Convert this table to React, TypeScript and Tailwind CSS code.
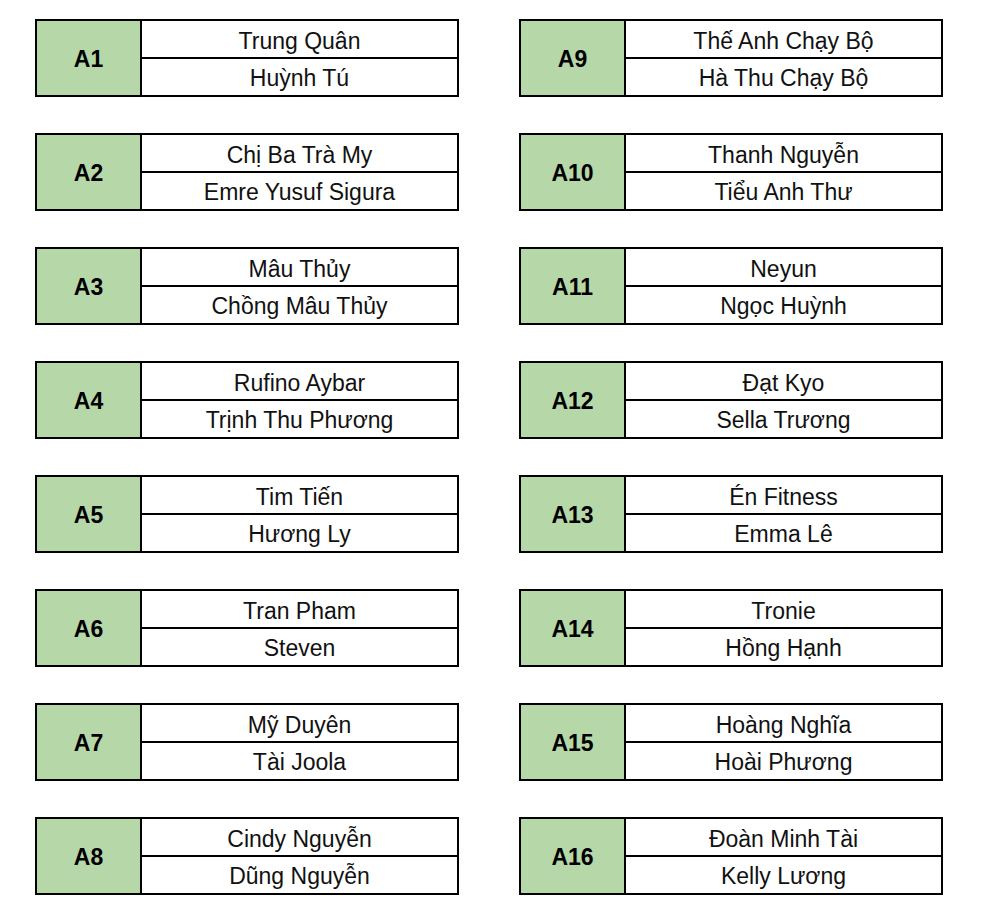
const left = [
  ["A1", "Trung Quân", "Huỳnh Tú"],
  ["A2", "Chị Ba Trà My", "Emre Yusuf Sigura"],
  ["A3", "Mâu Thủy", "Chồng Mâu Thủy"],
  ["A4", "Rufino Aybar", "Trịnh Thu Phương"],
  ["A5", "Tim Tiến", "Hương Ly"],
  ["A6", "Tran Pham", "Steven"],
  ["A7", "Mỹ Duyên", "Tài Joola"],
  ["A8", "Cindy Nguyễn", "Dũng Nguyễn"],
];

const right = [
  ["A9", "Thế Anh Chạy Bộ", "Hà Thu Chạy Bộ"],
  ["A10", "Thanh Nguyễn", "Tiểu Anh Thư"],
  ["A11", "Neyun", "Ngọc Huỳnh"],
  ["A12", "Đạt Kyo", "Sella Trương"],
  ["A13", "Én Fitness", "Emma Lê"],
  ["A14", "Tronie", "Hồng Hạnh"],
  ["A15", "Hoàng Nghĩa", "Hoài Phương"],
  ["A16", "Đoàn Minh Tài", "Kelly Lương"],
];

function Pair({ code, first, second }: { code: string; first: string; second: string }) {
  return (
    <div className="flex h-[78px] w-[424px] border-2 border-black">
      <div className="flex w-[105px] items-center justify-center border-r-2 border-black bg-[#b6d7a8] pt-[2px] text-[23px] font-bold text-black">
        {code}
      </div>
      <div className="flex flex-1 flex-col">
        <div className="flex h-[38px] shrink-0 items-center justify-center border-b-2 border-black pt-[4px] text-[23px] text-[#111]">
          {first}
        </div>
        <div className="flex flex-1 items-center justify-center pt-[2px] text-[23px] text-[#111]">
          {second}
        </div>
      </div>
    </div>
  );
}

export default function App() {
  return (
    <div
      className="flex h-[922px] w-[984px] gap-[60px] bg-white pl-[35px] pt-[19px]"
      style={{ fontFamily: '"Liberation Sans", Arial, sans-serif' }}
    >
      {[left, right].map((col, i) => (
        <div key={i} className="flex flex-col gap-[36px]">
          {col.map(([code, a, b]) => (
            <Pair key={code} code={code} first={a} second={b} />
          ))}
        </div>
      ))}
    </div>
  );
}
